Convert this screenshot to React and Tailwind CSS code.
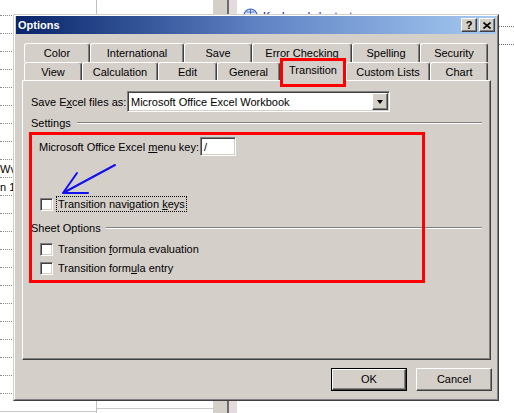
import React from "react";

const font = "font-['Liberation_Sans',Arial,sans-serif]";

const backTabs = [
  { label: "Color", w: "w-[66px]" },
  { label: "International", w: "w-[94px]" },
  { label: "Save", w: "w-[68px]" },
  { label: "Error Checking", w: "w-[100px]" },
  { label: "Spelling", w: "w-[68px]" },
  { label: "Security", w: "w-[68px]" },
];

const frontTabs = [
  { label: "View", w: "w-[58px]" },
  { label: "Calculation", w: "w-[76px]" },
  { label: "Edit", w: "w-[59px]" },
  { label: "General", w: "w-[63px]" },
  { label: "Transition", w: "w-[66px]", active: true },
  { label: "Custom Lists", w: "w-[84px]" },
  { label: "Chart", w: "w-[58px]" },
];

const sheetRows = Array.from({ length: 22 }, (_, i) => i);

const Tab = ({ label, w, h = "h-[19px]" }) => (
  <div
    className={`${w} ${h} flex items-center justify-center rounded-t-[3px] border-l border-t border-l-white border-t-white border-r border-r-[#404040] shadow-[inset_-1px_0_0_#808080] leading-[14px]`}
  >
    {label}
  </div>
);

const ActiveTab = ({ label, w }) => (
  <div className={`${w} relative z-10 h-[21px] -mb-px flex items-start justify-center`}>
    <div className="h-full w-full flex items-center justify-center rounded-t-[3px] border-l border-t border-l-white border-t-white border-r border-r-[#404040] shadow-[inset_-1px_0_0_#808080] bg-[#d5cfca] pb-[1px]">
      {label}
    </div>
    {/* red highlight drawn over the tab */}
    <div className="absolute -top-[2px] -bottom-[6px] left-0 right-0 border-[3px] border-[#ff0000] z-20" />
  </div>
);

const Check = () => (
  <span className="block w-[13px] h-[13px] shrink-0 bg-white border border-t-[#808080] border-l-[#808080] border-r-white border-b-white shadow-[inset_1px_1px_0_#404040,inset_-1px_-1px_0_#d4d0c8]" />
);

const Etched = ({ className = "" }) => (
  <div className={`flex-1 h-[2px] border-t border-t-[#808080] border-b border-b-white ${className}`} />
);

const Raised = ({ children, className = "" }) => (
  <div
    className={`flex items-center justify-center border border-t-white border-l-white border-r-[#404040] border-b-[#404040] shadow-[inset_-1px_-1px_0_#808080] ${className}`}
  >
    {children}
  </div>
);

export default function App() {
  return (
    <div className={`relative w-[514px] h-[413px] overflow-hidden bg-white text-[11px] text-black ${font}`}>
      {/* worksheet behind the dialog */}
      <div className="flex h-full">
        <div className="w-[97px] border-r border-[#c0c0c0] flex flex-col pt-[15px]">
          {sheetRows.map((i) => (
            <div key={i} className="h-[18px] shrink-0 border-t border-dotted border-[#8c8c8c] pt-[2px] leading-[14px] whitespace-nowrap overflow-hidden">
              {i === 8 && <span>Wv</span>}
              {i === 9 && <span>n 1</span>}
            </div>
          ))}
          <div className="mt-auto h-[5px] shrink-0 border-t border-[#c8c8c8]" />
        </div>
        <div className="w-[116px] flex flex-col">
          <div className="mt-auto h-[5px] border-t border-[#c8c8c8]" />
        </div>
        <div className="w-[24px] flex bg-[#d4d0c8]">
          <div className="w-[14px]" />
          <div className="w-[2px] bg-[#6c6c6c]" />
          <div className="flex-1 bg-[#e4dcdc]" />
        </div>
        <div className="flex-1 flex flex-col">
          <div className="h-[26px] flex items-start pt-[8px] pl-[6px] gap-[5px]">
            <svg width="15" height="15" viewBox="0 0 15 15">
              <circle cx="7.5" cy="7.5" r="6.5" fill="#dfe8fb" stroke="#3a63c8" strokeWidth="1.2" />
              <path d="M2 7.5h11M7.5 1v13M3.5 4h8M3.5 11h8" stroke="#3a63c8" strokeWidth="0.9" fill="none" />
            </svg>
            <span className="text-[#0000ff] underline leading-[14px] mt-[1px]">Keyboard shortcuts</span>
          </div>
          <div className="h-[18px] border-t border-dotted border-[#6c6c6c]" />
          <div className="h-[18px] border-t border-dotted border-[#6c6c6c]" />
        </div>
      </div>

      {/* Options dialog */}
      <div className="absolute left-[13px] top-[14px] w-[486px] h-[387px] bg-[#d5cfca] border border-t-[#d4d0c8] border-l-[#d4d0c8] border-r-[#404040] border-b-[#404040]">
        <div className="h-full flex flex-col border border-t-white border-l-white border-r-[#808080] border-b-[#808080] px-px pb-px">
          {/* title bar */}
          <div className="h-[18px] shrink-0 flex items-center pl-[2px] pr-[1px] bg-linear-to-r from-[#0a246a] via-[#5f82c4] to-[#a6caf0]">
            <span className="flex-1 font-bold text-white leading-[14px]">Options</span>
            <div className="flex gap-[2px]">
              <Raised className="w-[16px] h-[14px] bg-[#d4d0c8]">
                <span className="font-bold text-[11px] leading-[10px]">?</span>
              </Raised>
              <Raised className="w-[16px] h-[14px] bg-[#d4d0c8]">
                <svg width="8" height="7" viewBox="0 0 8 7">
                  <path d="M0.5 0.5L7.5 6.5M7.5 0.5L0.5 6.5" stroke="#000" strokeWidth="1.6" />
                </svg>
              </Raised>
            </div>
          </div>

          {/* tab strip */}
          <div className="mt-[9px] ml-[8px] flex">
            {backTabs.map((t) => (
              <Tab key={t.label} {...t} />
            ))}
          </div>
          <div className="ml-[8px] h-[18px] flex items-end">
            {frontTabs.map((t) =>
              t.active ? <ActiveTab key={t.label} {...t} /> : <Tab key={t.label} {...t} h="h-[18px]" />
            )}
          </div>

          {/* tab page */}
          <div className="relative ml-[6px] w-[469px] h-[280px] shrink-0 border border-t-white border-l-white border-r-[#404040] border-b-[#404040] shadow-[inset_-1px_-1px_0_#808080] flex flex-col leading-[14px]">
            <div className="mt-[10px] ml-[8px] h-[21px] flex items-center">
              <span className="w-[96px]">
                Save E<u>x</u>cel files as:
              </span>
              <div className="w-[263px] h-[21px] flex bg-white border border-t-[#808080] border-l-[#808080] border-r-white border-b-white shadow-[inset_1px_1px_0_#404040,inset_-1px_-1px_0_#d4d0c8] p-px">
                <span className="flex-1 pl-[2px] pt-[2px]">Microsoft Office Excel Workbook</span>
                <Raised className="w-[16px] h-[17px] bg-[#d4d0c8]">
                  <span className="block w-0 h-0 border-l-[3.5px] border-r-[3.5px] border-t-[4px] border-l-transparent border-r-transparent border-t-black" />
                </Raised>
              </div>
            </div>

            <div className="mt-[4px] ml-[8px] mr-[8px] h-[14px] flex items-center">
              <span>Settings</span>
              <Etched className="ml-[6px]" />
            </div>

            <div className="mt-[7px] ml-[16px] h-[19px] flex items-center">
              <span className="w-[161px]">
                Microsoft Office Excel <u>m</u>enu key:
              </span>
              <div className="w-[36px] h-[19px] bg-white border border-t-[#808080] border-l-[#808080] border-r-white border-b-white shadow-[inset_1px_1px_0_#404040,inset_-1px_-1px_0_#d4d0c8] pl-[3px] pt-[2px]">
                /
              </div>
            </div>

            <div className="mt-[41px] ml-[17px] h-[14px] flex items-center gap-[3px]">
              <Check />
              <span className="border border-dotted border-black px-px">
                Transition navigation <u>k</u>eys
              </span>
            </div>

            <div className="mt-[10px] ml-[8px] mr-[8px] h-[14px] flex items-center">
              <span>Sheet Options</span>
              <Etched className="ml-[5px]" />
            </div>

            <div className="mt-[7px] ml-[17px] h-[14px] flex items-center gap-[3px]">
              <Check />
              <span className="border border-transparent px-px">
                Transition <u>f</u>ormula evaluation
              </span>
            </div>

            <div className="mt-[5px] ml-[17px] h-[14px] flex items-center gap-[3px]">
              <Check />
              <span className="border border-transparent px-px">
                Transition form<u>u</u>la entry
              </span>
            </div>

            {/* red box and blue pointer marked over the settings */}
            <div className="absolute left-[6px] top-[51px] w-[396px] h-[151px] border-[3px] border-[#ff0000]" />
            <svg className="absolute left-0 top-0" width="120" height="130" viewBox="0 0 120 130">
              <path
                d="M92 84L40 112M40 112L54 92M40 112L65 112"
                stroke="#1010f0"
                strokeWidth="2"
                fill="none"
                strokeLinecap="round"
              />
            </svg>
          </div>

          {/* dialog buttons */}
          <div className="mt-[8px] mr-[4px] flex justify-end gap-[9px]">
            <div className="border border-black">
              <Raised className="w-[74px] h-[21px]">OK</Raised>
            </div>
            <Raised className="w-[76px] h-[23px]">Cancel</Raised>
          </div>
        </div>
      </div>
    </div>
  );
}
